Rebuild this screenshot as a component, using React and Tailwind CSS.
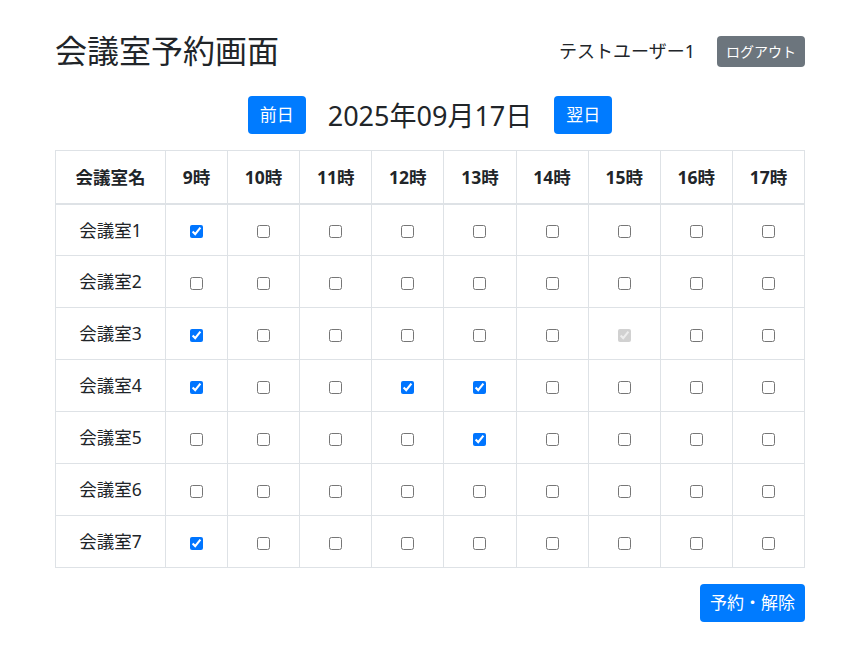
import React from "react";

const hours = [9, 10, 11, 12, 13, 14, 15, 16, 17];
const checked = {
  1: [9],
  2: [],
  3: [9],
  4: [9, 12, 13],
  5: [13],
  6: [],
  7: [9],
};
const disabled = { 3: [15] };

export default function App() {
  const font = { fontFamily: '"Noto Sans", "Noto Sans CJK JP", sans-serif' };
  return (
    <div className="min-h-[655px] bg-white text-[#212529]" style={font}>
      <div className="ml-[55px] w-[750px] pt-[28px]">
        <div className="flex h-[46px] items-center justify-between">
          <h1 className="text-[32px] leading-none font-normal">会議室予約画面</h1>
          <div className="flex items-center gap-[22px]">
            <span className="text-[18px]">テストユーザー1</span>
            <button className="h-[31px] rounded-[4px] bg-[#6c757d] px-[9px] text-[14px] text-white">
              ログアウト
            </button>
          </div>
        </div>

        <div className="mt-[22px] flex h-[38px] items-center justify-center gap-[22px]">
          <button className="h-[38px] rounded-[4px] bg-[#007bff] px-3 text-[17px] text-white">前日</button>
          <span className="text-[27px] leading-none">2025年09月17日</span>
          <button className="h-[38px] rounded-[4px] bg-[#007bff] px-3 text-[17px] text-white">翌日</button>
        </div>

        <table className="mt-[16px] w-[750px] table-fixed border-collapse border border-[#dee2e6] text-[17.5px]">
          <colgroup>
            <col className="w-[110px]" />
            <col className="w-[62px]" />
            {hours.slice(1).map((h) => (
              <col key={h} />
            ))}
          </colgroup>
          <thead>
            <tr className="h-[53px]">
              <th className="border border-b-2 border-[#dee2e6] text-center font-bold">会議室名</th>
              {hours.map((h) => (
                <th key={h} className="border border-b-2 border-[#dee2e6] text-center font-bold">
                  {h}時
                </th>
              ))}
            </tr>
          </thead>
          <tbody>
            {[1, 2, 3, 4, 5, 6, 7].map((r) => (
              <tr key={r} className="h-[52px]">
                <td className="border border-[#dee2e6] text-center">会議室{r}</td>
                {hours.map((h) => {
                  const dis = (disabled[r] || []).includes(h);
                  const chk = checked[r].includes(h) || dis;
                  return (
                    <td key={h} className="border border-[#dee2e6] text-center align-middle">
                      <input
                        type="checkbox"
                        defaultChecked={chk}
                        disabled={dis}
                        className="m-0 inline-block align-middle"
                      />
                    </td>
                  );
                })}
              </tr>
            ))}
          </tbody>
        </table>

        <div className="mt-[16px] flex justify-end">
          <button className="h-[38px] rounded-[4px] bg-[#007bff] px-[10px] text-[17px] text-white">予約・解除</button>
        </div>
      </div>
    </div>
  );
}
